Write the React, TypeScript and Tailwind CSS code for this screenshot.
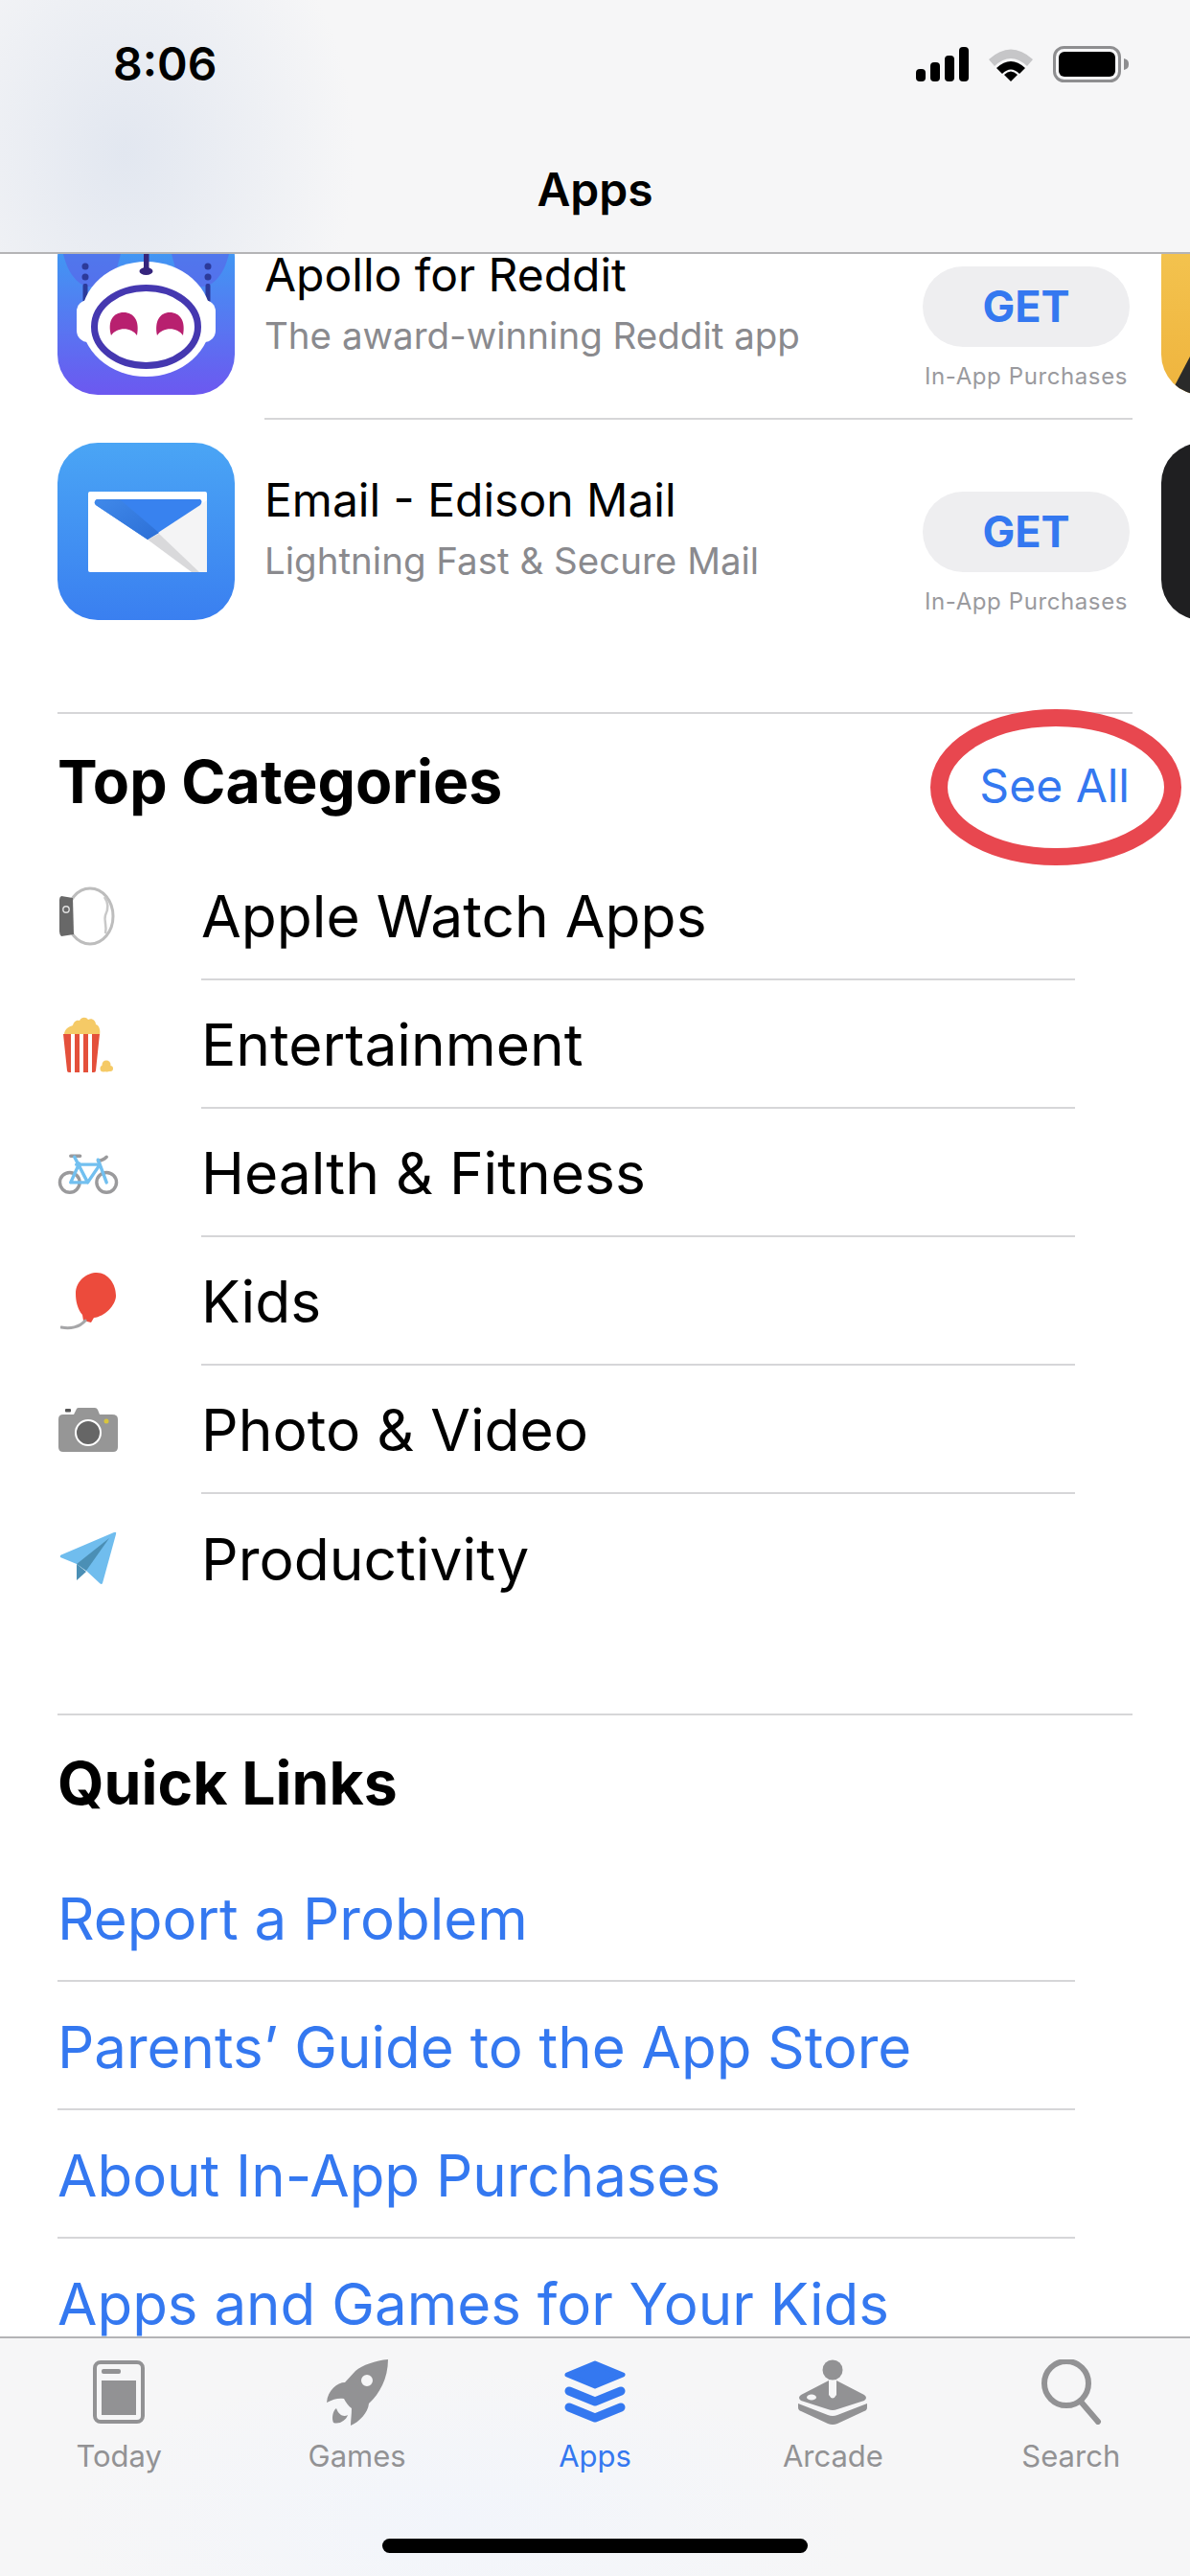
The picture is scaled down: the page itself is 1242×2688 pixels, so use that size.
import type { ReactNode } from 'react';

const font = "font-['Inter','Noto_Sans',sans-serif]";

function StatusIcons() {
  return (
    <div className="flex items-center gap-[20px]">
      <svg width="55" height="36" viewBox="0 0 55 36">
        <rect x="0" y="23" width="10" height="13" rx="4" fill="#000" />
        <rect x="15" y="16" width="10" height="20" rx="4" fill="#000" />
        <rect x="30" y="9" width="10" height="27" rx="4" fill="#000" />
        <rect x="45" y="0" width="10" height="36" rx="4" fill="#000" />
      </svg>
      <svg width="48" height="36" viewBox="0 0 48 36">
        <path d="M1 13 Q24 -8 47 13 L41 20 Q24 4 7 20 Z" fill="#c6c6c8" />
        <path d="M9 22 Q24 8 39 22 L33 28 Q24 19 15 28 Z" fill="#000" />
        <path d="M17 29 Q24 22 31 29 L24 36 Z" fill="#000" />
      </svg>
      <svg width="80" height="38" viewBox="0 0 80 38">
        <rect x="1.5" y="1.5" width="68" height="35" rx="10" fill="none" stroke="#8e8e90" strokeWidth="3" />
        <rect x="6" y="6" width="59" height="26" rx="6" fill="#000" />
        <path d="M74 13 C78 14 79 16 79 19 C79 22 78 24 74 25 Z" fill="#8e8e90" />
      </svg>
    </div>
  );
}

function ApolloIcon() {
  return (
    <svg width="185" height="185" viewBox="0 0 185 185" className="shrink-0">
      <defs>
        <linearGradient id="apollo" x1="0" y1="0" x2="0" y2="1">
          <stop offset="0.15" stopColor="#3f9af3" />
          <stop offset="1" stopColor="#6c58f0" />
        </linearGradient>
      </defs>
      <rect width="185" height="185" rx="42" fill="url(#apollo)" />
      <path d="M6 38 C14 70 34 84 60 60 L66 38 Z M179 38 C171 70 151 84 125 60 L119 38 Z" fill="#5a62e8" opacity="0.6" />
      <circle cx="29" cy="51" r="3.5" fill="#2c3a9a" />
      <circle cx="29" cy="62" r="3.5" fill="#2c3a9a" />
      <rect x="26.5" y="69" width="5" height="20" rx="2" fill="#2c3a9a" />
      <circle cx="157" cy="51" r="3.5" fill="#2c3a9a" />
      <circle cx="157" cy="62" r="3.5" fill="#2c3a9a" />
      <rect x="154.5" y="69" width="5" height="20" rx="2" fill="#2c3a9a" />
      <ellipse cx="92.5" cy="106" rx="68" ry="60" fill="#fff" />
      <rect x="20" y="86" width="24" height="44" rx="12" fill="#fff" />
      <rect x="141" y="86" width="24" height="44" rx="12" fill="#fff" />
      <rect x="90" y="36" width="5.5" height="20" fill="#35247c" />
      <ellipse cx="92.5" cy="56" rx="7" ry="4" fill="#35247c" />
      <ellipse cx="92.5" cy="114" rx="54" ry="40.5" fill="#fff" stroke="#4538b0" strokeWidth="7" />
      <path d="M56 123 C52 108 58 99 69 99 C80 99 86 108 83 123 C77 114 62 114 56 123 Z" fill="#b8206f" />
      <path d="M104 123 C101 108 107 99 117 99 C128 99 134 108 131 123 C125 114 110 114 104 123 Z" fill="#b8206f" />
    </svg>
  );
}

function EdisonIcon() {
  return (
    <svg width="185" height="185" viewBox="0 0 185 185" className="shrink-0">
      <defs>
        <linearGradient id="edison" x1="0" y1="0" x2="0" y2="1">
          <stop offset="0" stopColor="#4aa5f5" />
          <stop offset="1" stopColor="#3a7ff0" />
        </linearGradient>
        <linearGradient id="flapdark" x1="0" y1="0" x2="1" y2="1">
          <stop offset="0" stopColor="#4089ea" />
          <stop offset="1" stopColor="#2c6fd6" />
        </linearGradient>
      </defs>
      <rect width="185" height="185" rx="42" fill="url(#edison)" />
      <rect x="32" y="51" width="124" height="84" rx="2" fill="#fff" />
      <path d="M94 101 L156 60 L156 135 L148 135 Z" fill="#f4f4f5" />
      <path d="M94 101 L106 95 L148 135 L140 135 Z" fill="#d9d9db" />
      <path d="M41 59 Q37 62 40 65 L94 101 L149 65 Q152 61 149 59 Z" fill="#3882ef" />
      <path d="M41 59 Q37 62 40 65 L94 101 L106 94 L65 59 Z" fill="url(#flapdark)" />
    </svg>
  );
}

function WatchIcon() {
  return (
    <svg width="60" height="62" viewBox="0 0 60 62">
      <ellipse cx="32" cy="31" rx="24" ry="29" fill="none" stroke="#bdbdbd" strokeWidth="3" />
      <path d="M47 11 C52 18 51 24 48 30 C46 36 50 40 48 49" fill="none" stroke="#c8c8c8" strokeWidth="2.5" />
      <path d="M2 10 L14 12 L15 50 L2 52 Q0 50 0 47 L0 14 Q0 11 2 10 Z" fill="#686868" />
      <circle cx="7" cy="24" r="3.2" fill="none" stroke="#e0e0e0" strokeWidth="1.4" />
    </svg>
  );
}

function PopcornIcon() {
  return (
    <svg width="52" height="58" viewBox="0 0 52 58">
      <path d="M1 19 C1 12 7 10 10 9 C11 4 15 3 17 4 C19 0 24 0 26 3 C30 1 34 4 34 8 C38 9 39 15 38 19 Z" fill="#f5ca66" />
      <path d="M0 18 H38 L34 56 Q34 58 32 58 H6 Q4 58 4 56 Z" fill="#e4503b" />
      <rect x="8" y="18" width="4" height="40" fill="#fff" />
      <rect x="17" y="18" width="4" height="40" fill="#fff" />
      <rect x="26" y="18" width="4" height="40" fill="#fff" />
      <circle cx="45" cy="50" r="4.5" fill="#f5ca66" />
      <circle cx="49" cy="54" r="3" fill="#f5ca66" />
      <circle cx="42" cy="54" r="3.5" fill="#f5ca66" />
      <circle cx="45.5" cy="54" r="3.5" fill="#f5ca66" />
    </svg>
  );
}

function BikeIcon() {
  return (
    <svg width="65" height="45" viewBox="10 20 65 45">
      <circle cx="23" cy="52" r="10.5" fill="none" stroke="#9a9a9c" strokeWidth="3.5" />
      <circle cx="62" cy="52" r="10.5" fill="none" stroke="#9a9a9c" strokeWidth="3.5" />
      <path d="M24 24 H34 M53 29 Q58 29 62 25" fill="none" stroke="#9a9a9c" strokeWidth="3.5" strokeLinecap="round" />
      <path d="M28 25 L42 52 L55 33 H30 M33 32 L24 52 H42 M53 28 L62 52" fill="none" stroke="#72c0f0" strokeWidth="3.5" strokeLinejoin="round" strokeLinecap="round" />
    </svg>
  );
}

function BalloonIcon() {
  return (
    <svg width="59" height="60" viewBox="0 0 59 60">
      <path d="M16 22 C16 8 28 0 38 0 C50 0 58 12 58 24 C58 34 46 46 35 47 L32 52 L24 50 L23 44 C18 38 16 30 16 22 Z" fill="#ec4b3c" />
      <path d="M1 57 C10 59 20 57 26 50" fill="none" stroke="#a6a6a8" strokeWidth="3" strokeLinecap="round" />
    </svg>
  );
}

function CameraIcon() {
  return (
    <svg width="62" height="46" viewBox="0 0 62 46">
      <path d="M5 7 H16 L19 1 Q19.5 0 21 0 H38 Q40 0 41 2 L43 7 H56 Q62 7 62 12 V41 Q62 46 57 46 H5 Q0 46 0 41 V12 Q0 7 5 7 Z" fill="#969696" />
      <rect x="7" y="1" width="6" height="3.5" rx="1" fill="#555" />
      <circle cx="31" cy="26" r="13" fill="#666" stroke="#fff" strokeWidth="2" />
      <circle cx="50" cy="14" r="2.5" fill="#d8c53c" />
    </svg>
  );
}

function PlaneIcon() {
  return (
    <svg width="60" height="56" viewBox="0 0 60 56">
      <path d="M18 34 L18 51 L28 42 Z" fill="#4b8fb5" />
      <path d="M1 27 Q0 25 3 24 L57 1 Q60 0 59 3 L45 54 Q44 56 42 54 L28 41 L18 34 Z" fill="#70bdee" />
      <path d="M18 34 L52 7 L28 41 Z" fill="#4b8fb5" />
    </svg>
  );
}

function TodayIcon({ color }: { color: string }) {
  return (
    <svg width="54" height="66" viewBox="0 0 54 66">
      <rect x="2" y="2" width="50" height="62" rx="6" fill="none" stroke={color} strokeWidth="4" />
      <rect x="9" y="9" width="20" height="5" rx="2" fill={color} />
      <rect x="9" y="21" width="36" height="36" fill={color} />
    </svg>
  );
}

function RocketIcon({ color }: { color: string }) {
  return (
    <svg width="66" height="70" viewBox="10 11 66 70">
      <path
        fillRule="evenodd"
        d="M75 12 C62 13 48 18 41 24 L30 36 C22 36 12 44 11 57 C18 53 24 52 29 53 C31 57 34 61 37 63 C37 70 36 75 36 81 C45 77 54 68 55 58 C66 48 75 32 75 12 Z M53 28 A6 6 0 1 0 53 40 A6 6 0 1 0 53 28 Z"
        fill={color}
      />
      <path d="M21 63 C17 66 16 74 18 78 C24 80 31 76 33 70 C29 72 24 71 21 63 Z" fill={color} />
    </svg>
  );
}

function LayersIcon({ color }: { color: string }) {
  return (
    <svg width="66" height="66" viewBox="0 0 66 66">
      <polygon points="33,3 62,15 33,27 4,15" fill={color} stroke={color} strokeWidth="5" strokeLinejoin="round" />
      <polyline points="6,32 33,43 60,32" fill="none" stroke={color} strokeWidth="9" strokeLinecap="round" strokeLinejoin="round" />
      <polyline points="6,49 33,60 60,49" fill="none" stroke={color} strokeWidth="9" strokeLinecap="round" strokeLinejoin="round" />
    </svg>
  );
}

function ArcadeIcon({ color }: { color: string }) {
  return (
    <svg width="73" height="69" viewBox="7 12 73 69">
      <circle cx="43" cy="23" r="10.5" fill={color} />
      <path d="M39 34 L10 49 Q6 52 10 55 L38 64 Q43 66 48 64 L76 55 Q80 52 76 49 L47 34 V49 Q43 56 39 49 Z" fill={color} />
      <ellipse cx="21" cy="51.5" rx="5" ry="3" fill="#f6f6f7" />
      <path d="M7 58 L38 70 Q43 72 48 70 L79 58 V62 Q79 65 76 66 L48 79 Q43 81 38 79 L10 66 Q7 65 7 62 Z" fill={color} />
    </svg>
  );
}

function SearchIcon({ color }: { color: string }) {
  return (
    <svg width="64" height="68" viewBox="0 0 64 68">
      <circle cx="27" cy="25" r="23" fill="none" stroke={color} strokeWidth="6" />
      <path d="M42 44 L60 65" fill="none" stroke={color} strokeWidth="6" strokeLinecap="round" />
    </svg>
  );
}

function YellowPeek() {
  return (
    <svg width="60" height="185" viewBox="0 0 60 185">
      <defs>
        <linearGradient id="peek" x1="0" y1="0" x2="0" y2="1">
          <stop offset="0" stopColor="#f4c652" />
          <stop offset="1" stopColor="#efb43e" />
        </linearGradient>
        <clipPath id="peekclip">
          <rect width="100" height="185" rx="42" />
        </clipPath>
      </defs>
      <g clipPath="url(#peekclip)">
        <rect width="100" height="185" fill="url(#peek)" />
        <path d="M9 185 L60 88 V185 Z" fill="#2a2a2a" />
      </g>
    </svg>
  );
}

function AppRow({ icon, peek, title, subtitle }: { icon: ReactNode; peek: ReactNode; title: string; subtitle: string }) {
  return (
    <div className="flex h-[185px] w-[1212px] items-center">
      {icon}
      <div className="ml-[31px] min-w-0 flex-1 pb-[7px]">
        <p className="text-[48px] leading-[58px] text-black">{title}</p>
        <p className="mt-[9px] text-[38.5px] leading-[50px] text-[#8a8a8e]">{subtitle}</p>
      </div>
      <div className="mr-[3px] flex w-[216px] shrink-0 flex-col items-center pt-[44px]">
        <div className="flex h-[84px] w-[216px] items-center justify-center rounded-full bg-[#eeeef0] text-[45px] font-bold text-[#3478f0]">GET</div>
        <p className="mt-[18px] text-[24px] leading-[26px] tracking-[0.6px] text-[#9a9a9e]">In-App Purchases</p>
      </div>
      <div className="ml-[30px] shrink-0">{peek}</div>
    </div>
  );
}

function Divider({ className }: { className: string }) {
  return <div className={`h-[2px] bg-[#d6d6d8] ${className}`} />;
}

const categories: { label: string; icon: ReactNode }[] = [
  { label: 'Apple Watch Apps', icon: <WatchIcon /> },
  { label: 'Entertainment', icon: <PopcornIcon /> },
  { label: 'Health & Fitness', icon: <BikeIcon /> },
  { label: 'Kids', icon: <BalloonIcon /> },
  { label: 'Photo & Video', icon: <CameraIcon /> },
  { label: 'Productivity', icon: <PlaneIcon /> },
];

const links = ['Report a Problem', 'Parents’ Guide to the App Store', 'About In-App Purchases', 'Apps and Games for Your Kids'];

const tabs = [
  { label: 'Today', Icon: TodayIcon },
  { label: 'Games', Icon: RocketIcon },
  { label: 'Apps', Icon: LayersIcon, active: true },
  { label: 'Arcade', Icon: ArcadeIcon },
  { label: 'Search', Icon: SearchIcon },
];

export default function App() {
  return (
    <div className={`flex h-[2688px] w-[1242px] flex-col overflow-hidden bg-white ${font}`}>
      <header className="h-[265px] shrink-0 border-b-2 border-[#b4b4b6] bg-[#f6f6f7] bg-[radial-gradient(ellipse_240px_300px_at_130px_160px,#e2e7f0,transparent)]">
        <div className="flex items-center justify-between pl-[118px] pr-[63px] pt-[41px]">
          <span className="text-[48px] font-semibold leading-[52px] text-black">8:06</span>
          <StatusIcons />
        </div>
        <h1 className="mt-[75px] text-center text-[48px] font-semibold leading-[60px] text-black">Apps</h1>
      </header>

      <main className="relative min-h-0 flex-1 overflow-hidden pl-[60px]">
        <div className="-mt-[38px]">
          <AppRow icon={<ApolloIcon />} title="Apollo for Reddit" subtitle="The award-winning Reddit app" peek={<YellowPeek />} />
          <Divider className="my-[24px] ml-[216px] w-[906px]" />
          <AppRow
            icon={<EdisonIcon />}
            title="Email - Edison Mail"
            subtitle="Lightning Fast & Secure Mail"
            peek={<div className="h-[185px] w-[60px] rounded-l-[42px] bg-[#1f1f21]" />}
          />
        </div>

        <Divider className="mt-[96px] w-[1122px]" />
        <div className="flex h-[144px] w-[1119px] items-center justify-between">
          <h2 className="pb-[2px] text-[62.5px] font-bold text-black">Top Categories</h2>
          <a className="pt-[6px] text-[48px] text-[#3478f0]">See All</a>
        </div>
        <ul>
          {categories.map((c, i) => (
            <li key={c.label} className="flex h-[134px] items-stretch">
              <div className="flex w-[150px] shrink-0 items-center">
                <div className="flex w-[64px] justify-center">{c.icon}</div>
              </div>
              <div className={`flex w-[912px] items-center pt-[3px] text-[60.5px] text-black ${i < 5 ? 'border-b-2 border-[#d6d6d8]' : ''}`}>{c.label}</div>
            </li>
          ))}
        </ul>

        <Divider className="mt-[95px] w-[1122px]" />
        <h2 className="flex h-[144px] items-center pb-[2px] text-[62.5px] font-bold text-black">Quick Links</h2>
        <ul className="w-[1062px]">
          {links.map((l) => (
            <li key={l} className="flex h-[134px] items-center border-b-2 border-[#d6d6d8] pt-[3px] text-[60px] text-[#3478f0]">{l}</li>
          ))}
        </ul>

        <svg width="262" height="163" viewBox="0 0 262 163" className="absolute left-[971px] top-[475px]">
          <ellipse cx="131" cy="81.5" rx="122" ry="72.5" fill="none" stroke="#e8474f" strokeWidth="18" />
        </svg>
      </main>

      <footer className="relative h-[250px] shrink-0 border-t-2 border-[#b4b4b6] bg-[#f6f6f7] bg-[radial-gradient(ellipse_420px_160px_at_480px_190px,#f2f5fb,transparent)]">
        <div className="grid grid-cols-5 pt-[21px]">
          {tabs.map(({ label, Icon, active }) => {
            const color = active ? '#3478f0' : '#929294';
            return (
              <div key={label} className="flex flex-col items-center">
                <div className="flex h-[70px] items-center justify-center"><Icon color={color} /></div>
                <span className={`mt-[14px] text-[31px] leading-[36px] ${active ? 'text-[#3478f0]' : 'text-[#929294]'}`}>{label}</span>
              </div>
            );
          })}
        </div>
        <div className="absolute bottom-[24px] left-[399px] h-[15px] w-[444px] rounded-full bg-black" />
      </footer>
    </div>
  );
}
